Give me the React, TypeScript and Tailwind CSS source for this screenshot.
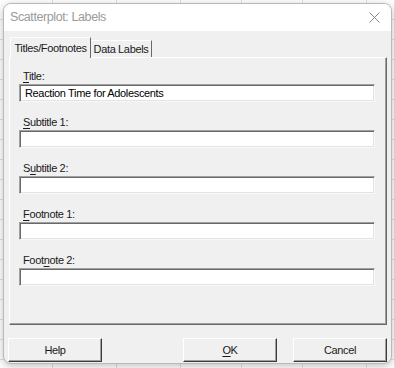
import React from "react";

const font = { fontFamily: '"Liberation Sans", Arial, sans-serif' };

function Field({ label, underline, value }: { label: string; underline: number; value?: string }) {
  const before = label.slice(0, underline);
  const ch = label.slice(underline, underline + 1);
  const after = label.slice(underline + 1);
  return (
    <div className="flex flex-col">
      <div className="h-[15px] whitespace-nowrap pl-[4px] text-[11px] leading-[15px] tracking-[-0.35px] text-[#1a1a1a]">
        {before}
        <span className="underline underline-offset-[2px]">{ch}</span>
        {after}
      </div>
      <div className="h-[18px] whitespace-nowrap border border-t-[#a0a0a0] border-l-[#a0a0a0] border-r-[#f8f8f8] border-b-[#f8f8f8] bg-white pl-[5px] text-[11px] leading-[16px] tracking-[-0.35px] text-black shadow-[inset_1px_1px_0_#696969,inset_-1px_-1px_0_#e3e3e3]">
        {value}
      </div>
    </div>
  );
}

function Btn({ children }: { children: React.ReactNode }) {
  return (
    <div className="flex h-[24px] w-[94px] items-center justify-center border border-t-white border-l-white border-r-[#3c3c3c] border-b-[#3c3c3c] bg-[#f0f0f0] text-[11px] tracking-[-0.35px] text-[#1a1a1a] shadow-[inset_-1px_-1px_0_#a0a0a0]">
      {children}
    </div>
  );
}

export default function App() {
  return (
    <div className="relative h-[368px] w-[395px] overflow-hidden bg-white" style={font}>
      {/* spreadsheet behind */}
      <div className="grid h-full w-full grid-cols-[53px_64px_64px_61px_61px_64px_28px] grid-rows-[repeat(19,20px)]">
        {Array.from({ length: 7 * 19 }).map((_, i) => (
          <div key={i} className="border-b border-r border-[#e1e1e1]" />
        ))}
      </div>

      {/* dialog window */}
      <div className="absolute left-[3px] top-[3px] flex h-[361px] w-[389px] flex-col overflow-hidden rounded-[8px] border border-[#b9b9b9] bg-[#f0f0f0] shadow-[0_2px_8px_rgba(0,0,0,0.25)]">
        {/* title bar */}
        <div className="flex h-[27px] shrink-0 items-center justify-between bg-white pl-[6px] pr-[11px]">
          <span className="whitespace-nowrap text-[12.5px] leading-none tracking-[-0.4px] text-[#9a9a9a]">Scatterplot: Labels</span>
          <svg width="11" height="11" viewBox="0 0 11 11">
            <path d="M0.5 0.5 L10.5 10.5 M10.5 0.5 L0.5 10.5" stroke="#8a8a8a" strokeWidth="1" fill="none" />
          </svg>
        </div>

        {/* tabs */}
        <div className="flex h-[26px] shrink-0 items-end pl-[6px] pt-[6px]">
          <div className="relative z-10 -mb-[1px] flex h-[21px] w-[81px] items-center justify-center whitespace-nowrap border-l border-t border-r border-l-white border-t-white border-r-[#696969] bg-[#f0f0f0] text-[11px] tracking-[-0.35px] text-[#1a1a1a]">
            Titles/Footnotes
          </div>
          <div className="flex h-[17px] w-[61px] items-center justify-center whitespace-nowrap border-t border-r border-t-white border-r-[#696969] text-[11px] tracking-[-0.35px] text-[#1a1a1a]">
            Data Labels
          </div>
        </div>

        {/* panel */}
        <div className="ml-[5px] mr-[4px] flex h-[268px] shrink-0 flex-col gap-[13px] border border-t-white border-l-white border-r-[#696969] border-b-[#696969] bg-[#f0f0f0] pl-[9px] pr-[11px] pt-[11px] shadow-[inset_-1px_-1px_0_#a0a0a0]">
          <Field label="Title:" underline={0} value="Reaction Time for Adolescents" />
          <Field label="Subtitle 1:" underline={0} />
          <Field label="Subtitle 2:" underline={1} />
          <Field label="Footnote 1:" underline={0} />
          <Field label="Footnote 2:" underline={4} />
        </div>

        {/* buttons */}
        <div className="mt-[13px] flex shrink-0 items-center px-[4px]">
          <Btn>Help</Btn>
          <div className="ml-auto flex gap-[16px]">
            <Btn>
              <span>
                <span className="underline underline-offset-[2px]">O</span>K
              </span>
            </Btn>
            <Btn>Cancel</Btn>
          </div>
        </div>
      </div>
    </div>
  );
}
